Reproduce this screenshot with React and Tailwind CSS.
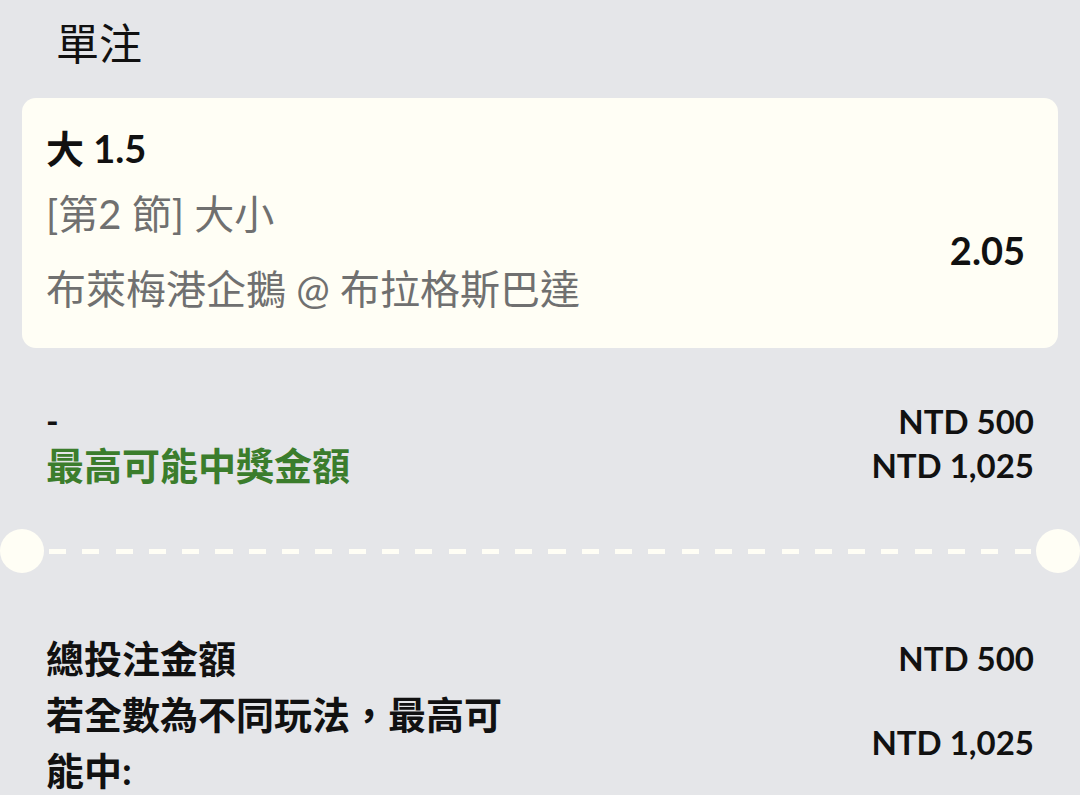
export default function App() {
  const font = { fontFamily: "Lato, 'Noto Sans CJK TC', 'Noto Sans', sans-serif" };
  return (
    <div className="w-[1080px] h-[795px] overflow-hidden bg-[#e5e6e9] text-[#111]" style={font}>
      <div className="pl-[56px] pt-[16px] h-[98px]">
        <div className="text-[43px] leading-[56px] font-normal">單注</div>
      </div>
      <div className="ml-[22px] w-[1036px] rounded-[14px] bg-[#fffef5] pl-[24px] pr-[33px] pt-[23px] pb-[24px] flex items-start">
        <div className="flex-1 flex flex-col">
          <div className="text-[38px] leading-[54px] font-bold">大 1.5</div>
          <div className="mt-[4px] text-[40px] leading-[70px] text-[#707070]">[第2 節] 大小</div>
          <div className="mt-[5px] text-[40px] leading-[70px] text-[#707070]">布萊梅港企鵝 @ 布拉格斯巴達</div>
        </div>
        <div className="text-[38px] font-bold leading-[50px] mt-[104px]">2.05</div>
      </div>

      <div className="mt-[51px] px-[46px] flex justify-between">
        <div className="flex flex-col">
          <div className="text-[34px] leading-[44px] font-bold">-</div>
          <div className="text-[38px] leading-[44px] font-bold text-[#3b7d2c]">最高可能中獎金額</div>
        </div>
        <div className="flex flex-col items-end">
          <div className="text-[33px] leading-[44px] font-bold">NTD 500</div>
          <div className="text-[33px] leading-[44px] font-bold">NTD 1,025</div>
        </div>
      </div>

      <div className="mt-[42px] flex items-center h-[44px]">
        <div className="w-[44px] h-[44px] rounded-full bg-[#fffef5] shrink-0" />
        <div className="flex-1 mx-[5px] h-[5px] bg-[repeating-linear-gradient(90deg,#fffef5_0_17px,transparent_17px_33.3px)]" />
        <div className="w-[44px] h-[44px] rounded-full bg-[#fffef5] shrink-0" />
      </div>

      <div className="mt-[57px] px-[46px] flex flex-col">
        <div className="flex justify-between items-center">
          <div className="text-[38px] leading-[56px] font-bold">總投注金額</div>
          <div className="text-[33px] leading-[56px] font-bold">NTD 500</div>
        </div>
        <div className="flex justify-between items-center">
          <div className="w-[470px] text-[38px] leading-[56px] font-bold">若全數為不同玩法，最高可能中:</div>
          <div className="text-[33px] leading-[56px] font-bold">NTD 1,025</div>
        </div>
      </div>
    </div>
  );
}
